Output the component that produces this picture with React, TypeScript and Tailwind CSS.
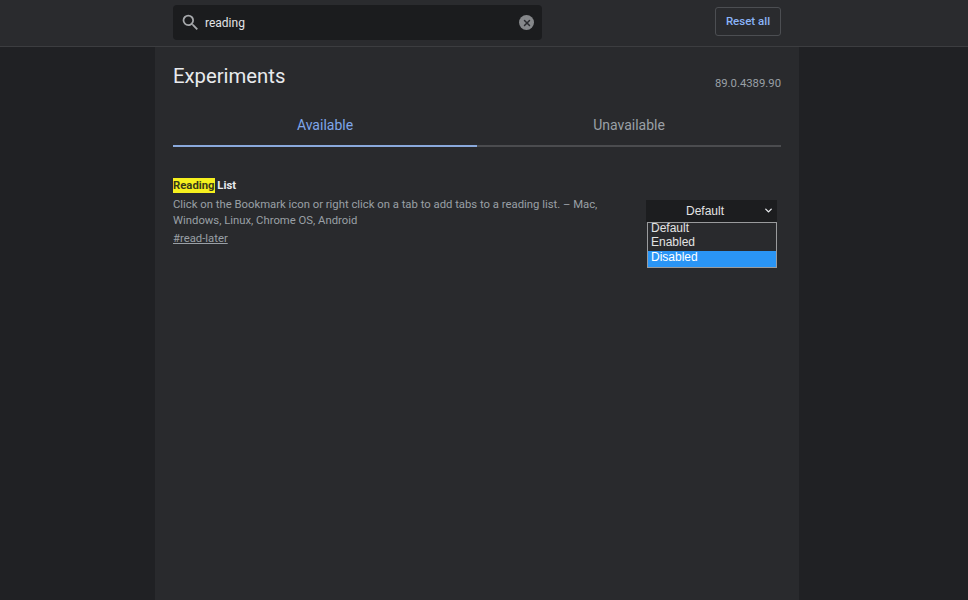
import { ChevronDown, X } from "lucide-react";

const options = [
  { label: "Default", className: "pl-[3px] leading-[11px]" },
  { label: "Enabled", className: "pl-[3px] leading-[17px]" },
  { label: "Disabled", className: "bg-[#2a95f5] pl-[3px] pb-[3px] leading-[13px] text-white" },
];

function FlagSelect() {
  return (
    <div className="relative mt-[22px] mr-1 h-[22px] w-[131px] shrink-0 font-['Liberation_Sans',sans-serif]">
      <div className="flex h-[22px] items-center justify-center bg-[#1c1d1f] pr-[13px] text-[12px] text-[#e3e3e3]">
        Default
        <ChevronDown className="absolute right-[3px] top-[5px] h-[11px] w-[11px] text-[#e8eaed]" strokeWidth={3} />
      </div>
      <ul className="absolute left-px top-[22px] w-[130px] border border-[#9a9b9d] bg-[#292a2d] text-[12px] text-[#e3e3e3]">
        {options.map((option) => (
          <li key={option.label} className={option.className}>
            {option.label}
          </li>
        ))}
      </ul>
    </div>
  );
}

export default function App() {
  return (
    <div className="flex h-[600px] w-[968px] flex-col overflow-hidden bg-[#202124] font-['Roboto',sans-serif]">
      <header className="flex h-[47px] shrink-0 items-start border-b border-[#3c3d40] bg-[#2a2b2e] pl-[173px] pr-[187px]">
        <div className="mt-[5px] flex h-[35px] w-[369px] items-center rounded-sm bg-[#1b1c1e] pl-[7px] pr-2">
          <svg viewBox="0 0 24 24" className="h-[21px] w-[21px] fill-[#a6a8ab]">
            <path d="M15.5 14h-.79l-.28-.27A6.471 6.471 0 0 0 16 9.5 6.5 6.5 0 1 0 9.5 16c1.61 0 3.09-.59 4.23-1.57l.27.28v.79l5 4.99L20.49 19l-4.99-5zm-6 0C7.01 14 5 11.99 5 9.5S7.01 5 9.5 5 14 7.01 14 9.5 11.99 14 9.5 14z" />
          </svg>
          <span className="ml-1 flex-1 text-[12px] text-[#e3e4e6]">reading</span>
          <span className="flex h-[15px] w-[15px] items-center justify-center rounded-full bg-[#85878a]">
            <X className="h-[10px] w-[10px] text-[#2a2b2e]" strokeWidth={3.5} />
          </span>
        </div>
        <button
          type="button"
          className="mt-[7px] ml-auto flex h-[29px] w-[66px] items-center justify-center rounded-[3px] border border-[#4c4e52] text-[11.5px] font-medium text-[#8ab4f8]"
        >
          Reset all
        </button>
      </header>

      <main className="ml-[155px] flex w-[644px] flex-1 flex-col bg-[#292a2d] pl-[18px] pr-[18px]">
        <div className="flex h-[56px] items-start justify-between">
          <h1 className="mt-[16px] text-[20.3px] leading-[26px] text-[#e8eaed]">Experiments</h1>
          <span className="mt-[30px] text-[11.3px] leading-[14px] text-[#9aa0a6]">89.0.4389.90</span>
        </div>

        <div className="flex h-[44px] text-[14px]">
          <div className="flex w-1/2 items-start justify-center border-b-2 border-[#8aa9dc] pt-[13px] leading-[18px] text-[#7fa6ea]">
            Available
          </div>
          <div className="flex w-1/2 items-start justify-center border-b-2 border-[#4b4c4f] pt-[13px] leading-[18px] text-[#9aa0a6]">
            Unavailable
          </div>
        </div>

        <section className="mt-[31px] flex items-start justify-between">
          <div className="w-[440px]">
            <h2 className="text-[11.3px] font-bold leading-[16px] text-[#e8eaed]">
              <span className="bg-[#f6f01e] py-px text-[#3a3a1a]">Reading</span> List
            </h2>
            <p className="mt-[3px] text-[11.3px] leading-[16px] text-[#9aa0a6]">
              Click on the Bookmark icon or right click on a tab to add tabs to a reading list. – Mac, Windows, Linux, Chrome OS, Android
            </p>
            <a className="mt-[2px] block text-[11.3px] leading-[16px] text-[#9aa0a6] underline">#read-later</a>
          </div>
          <FlagSelect />
        </section>
      </main>
    </div>
  );
}
